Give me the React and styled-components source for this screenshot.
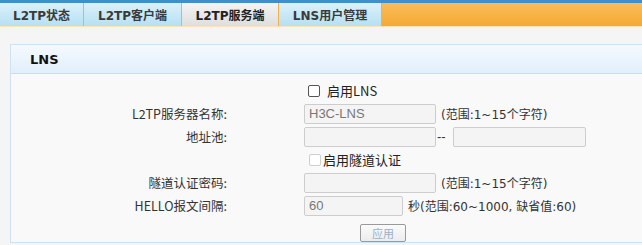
import React from 'react';
import styled, { createGlobalStyle } from 'styled-components';

const Global = createGlobalStyle`
  body {
    margin: 0;
    background: #f5f5f5;
    font-family: "DejaVu Sans", "Noto Sans CJK SC", sans-serif;
    overflow: hidden;
  }
`;

const Page = styled.div`
  width: 642px;
  height: 245px;
  border-top: 3px solid #3f8fce;
  box-sizing: border-box;
  background: #f5f5f5;
`;

const TabBar = styled.div`
  display: flex;
  height: 23px;
  background: linear-gradient(#f9bd58, #f5a935);
  border-bottom: 1px solid #fde3b5;
`;

const Tab = styled.div`
  width: ${p => p.w}px;
  display: flex;
  align-items: center;
  justify-content: center;
  font-size: 12px;
  font-weight: bold;
  color: ${p => (p.active ? '#222' : '#3a3a3a')};
  background: ${p => (p.active
    ? 'linear-gradient(#f4f4f4, #dedede)'
    : 'linear-gradient(#dbf1fa, #b6e0f2)')};
  border-right: 1px solid #f2b04a;
  box-sizing: border-box;
`;

const Content = styled.div`
  padding: 17px 0 0 10px;
`;

const Panel = styled.div`
  border: 1px solid #cfe2f2;
  border-right: none;
  background: #f9f9f9;
  height: 199px;
  box-sizing: border-box;
`;

const PanelHead = styled.div`
  height: 28px;
  display: flex;
  align-items: center;
  padding-left: 19px;
  font-size: 13px;
  font-weight: bold;
  color: #111;
  background: linear-gradient(#f4f9fe, #e2effb);
  border-bottom: 1px solid #c9ddf0;
`;

const Body = styled.div`
  padding-top: 5px;
  font-family: "Noto Sans CJK SC", "Liberation Sans", sans-serif;
  font-size: 12.5px;
  color: #333;
`;

const Row = styled.div`
  display: flex;
  align-items: center;
  height: 23px;
`;

const Label = styled.div`
  width: 216px;
  text-align: right;
  flex-shrink: 0;
`;

const Field = styled.div`
  display: flex;
  align-items: center;
  margin-left: ${p => p.offset ?? 77}px;
`;

const Input = styled.div`
  width: ${p => p.w || 132}px;
  height: 20px;
  box-sizing: border-box;
  border: 1px solid #cdcdcd;
  border-radius: 2px;
  background: #f4f4f4;
  color: #777;
  font-family: "Liberation Sans", sans-serif;
  font-size: 13px;
  display: flex;
  align-items: center;
  padding-left: 4px;
`;

const Hint = styled.span`
  margin-left: 5px;
  font-family: "DejaVu Sans", "Noto Sans CJK SC", sans-serif;
  font-size: 12px;
  color: #333;
`;

const Dash = styled.span`
  width: 16px;
  font-family: "Liberation Sans", sans-serif;
  font-size: 13px;
  color: #333;
  padding-left: 1px;
`;

const Check = styled.span`
  width: 12px;
  height: 12px;
  box-sizing: border-box;
  border: 1px solid ${p => (p.disabled ? '#cfcfcf' : '#555')};
  border-radius: 2px;
  background: #fff;
  margin-right: ${p => p.gap}px;
`;

const CheckText = styled.span`
  font-size: 13px;
  color: #222;
`;

const ButtonRow = styled.div`
  padding: 7px 0 0 349px;
`;

const Button = styled.div`
  width: 46px;
  height: 18px;
  box-sizing: border-box;
  border: 1px solid #9a9a9a;
  border-radius: 2px;
  background: linear-gradient(#fbfbfb, #ececec);
  color: #9ab0c8;
  font-size: 11px;
  display: flex;
  align-items: center;
  justify-content: center;
`;

const tabs = [
  { name: 'L2TP状态', w: 84 },
  { name: 'L2TP客户端', w: 98 },
  { name: 'L2TP服务端', w: 97, active: true },
  { name: 'LNS用户管理', w: 103 },
];

export default function App() {
  return (
    <Page>
      <Global />
      <TabBar>
        {tabs.map(t => (
          <Tab key={t.name} w={t.w} active={t.active}>{t.name}</Tab>
        ))}
      </TabBar>
      <Content>
        <Panel>
          <PanelHead>LNS</PanelHead>
          <Body>
            <Row>
              <Label />
              <Field offset={81}>
                <Check gap={7} />
                <CheckText>启用LNS</CheckText>
              </Field>
            </Row>
            <Row>
              <Label>L2TP服务器名称:</Label>
              <Field>
                <Input>H3C-LNS</Input>
                <Hint>(范围:1~15个字符)</Hint>
              </Field>
            </Row>
            <Row>
              <Label>地址池:</Label>
              <Field>
                <Input />
                <Dash>--</Dash>
                <Input w={133} />
              </Field>
            </Row>
            <Row>
              <Label />
              <Field offset={82}>
                <Check disabled gap={2} />
                <CheckText>启用隧道认证</CheckText>
              </Field>
            </Row>
            <Row>
              <Label>隧道认证密码:</Label>
              <Field>
                <Input />
                <Hint>(范围:1~15个字符)</Hint>
              </Field>
            </Row>
            <Row>
              <Label>HELLO报文间隔:</Label>
              <Field>
                <Input w={99}>60</Input>
                <Hint>秒(范围:60~1000, 缺省值:60)</Hint>
              </Field>
            </Row>
            <ButtonRow>
              <Button>应用</Button>
            </ButtonRow>
          </Body>
        </Panel>
      </Content>
    </Page>
  );
}
